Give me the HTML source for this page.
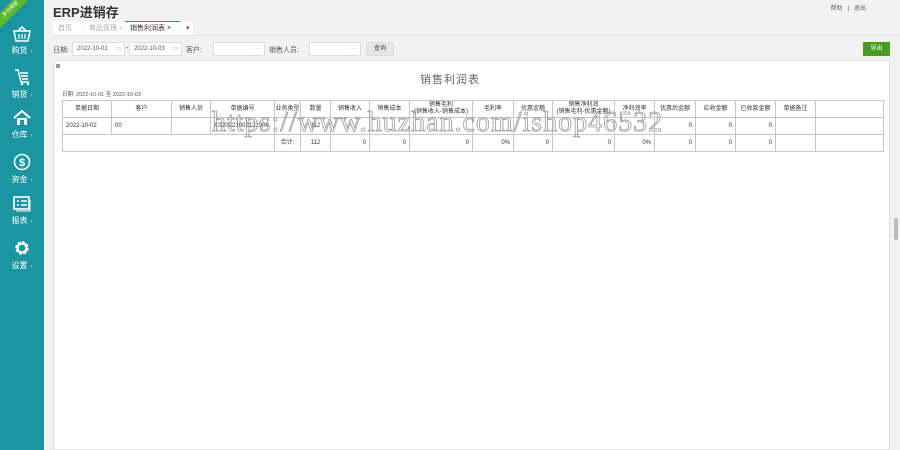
<!DOCTYPE html>
<html><head><meta charset="utf-8"><style>
*{margin:0;padding:0;box-sizing:border-box}
body{width:900px;height:450px;overflow:hidden;background:#f2f2f2;font-family:"Liberation Sans","Noto Sans CJK SC",sans-serif;font-size:7px;color:#444;position:relative}
.side{position:absolute;left:0;top:0;width:44px;height:450px;background:#1c95a2}
.nav{position:absolute;left:0;width:44px;text-align:center;color:#fff;font-size:8px}
.nav svg{display:block;margin:0 auto 3px}
.nav i{font-style:normal;font-size:6px;opacity:.7;margin-left:3px}
.rib{position:absolute;left:-14px;top:4px;width:50px;height:11px;background:#5cb82e;transform:rotate(-45deg);color:#fff;font-size:5px;text-align:center;line-height:11px}
.abs{position:absolute}
.tab{position:absolute;top:22px;height:13px;line-height:13px;font-size:7px;color:#aaa;padding-left:5px}
.inp{position:absolute;top:42px;height:14px;background:#fff;border:1px solid #ddd;font-size:6px;line-height:12px;padding-left:4px;color:#555}
.panel{position:absolute;left:53px;top:60px;width:837px;height:390px;background:#fff;border:1px solid #e0e0e0}
table{position:absolute;left:62px;top:100px;border-collapse:collapse;table-layout:fixed}
td{border:1px solid #c8c8c8;font-size:6px;height:17px;text-align:center;color:#333;overflow:hidden;white-space:nowrap;line-height:7px}
.r{text-align:right;padding-right:3px}
.l{text-align:left;padding-left:3px}
.wm{position:absolute;left:212px;top:107px;font-family:"Liberation Serif",serif;font-size:28px;color:transparent;-webkit-text-stroke:0.8px #999;letter-spacing:1px;white-space:nowrap}
</style></head><body>
<div class="side">
<div class="rib">多仓库版</div>
<div class="nav" style="top:26px"><svg width="20" height="16" viewBox="0 0 20 16"><path d="M2 5h16l-2 10H4z M6 5l4-4 4 4" fill="none" stroke="#fff" stroke-width="1.6"/><path d="M7 8v5M10 8v5M13 8v5" stroke="#fff" stroke-width="1.2"/></svg>购货<i>›</i></div>
<div class="nav" style="top:68px"><svg width="18" height="18" viewBox="0 0 18 18"><path d="M2 2h3l3 12h8" fill="none" stroke="#fff" stroke-width="1.6"/><path d="M7 5h8M8 8h7M9 11h6" stroke="#fff" stroke-width="1.5"/><circle cx="9" cy="16" r="1.3" fill="#fff"/><circle cx="15" cy="16" r="1.3" fill="#fff"/></svg>销货<i>›</i></div>
<div class="nav" style="top:110px"><svg width="18" height="16" viewBox="0 0 18 16"><path d="M1 8L9 1l8 7" fill="none" stroke="#fff" stroke-width="2"/><path d="M4 8v7h10V8" fill="#fff"/><rect x="7" y="10" width="4" height="5" fill="#1c95a2"/></svg>仓库<i>›</i></div>
<div class="nav" style="top:153px"><svg width="18" height="18" viewBox="0 0 18 18"><circle cx="9" cy="9" r="7.5" fill="none" stroke="#fff" stroke-width="1.6"/><text x="9" y="13" font-size="11" font-weight="bold" fill="#fff" text-anchor="middle" font-family="Liberation Sans">$</text></svg>资金<i>›</i></div>
<div class="nav" style="top:196px"><svg width="18" height="16" viewBox="0 0 18 16"><rect x="1" y="1" width="15" height="12" fill="none" stroke="#fff" stroke-width="1.6"/><path d="M4 5h2M8 5h6M4 9h2M8 9h6" stroke="#fff" stroke-width="1.5"/><path d="M3 15h14V4" fill="none" stroke="#fff" stroke-width="1"/></svg>报表<i>›</i></div>
<div class="nav" style="top:239px"><svg width="18" height="18" viewBox="0 0 18 18"><circle cx="9" cy="9" r="5" fill="none" stroke="#fff" stroke-width="3.5" stroke-dasharray="2.6 1.3"/><circle cx="9" cy="9" r="4.5" fill="none" stroke="#fff" stroke-width="2"/></svg>设置<i>›</i></div>
</div>
<div class="abs" style="left:53px;top:2px;font-size:13px;font-weight:bold;color:#333">ERP进销存</div>
<div class="abs" style="right:34px;top:3px;font-size:6px;color:#666">帮助 &nbsp;&nbsp;|&nbsp;&nbsp; 退出</div>
<div class="abs" style="left:53px;top:35px;width:847px;height:1px;background:#e2e2e2"></div>
<div class="tab" style="left:53px;width:30px;background:#fff">首页</div>
<div class="tab" style="left:84px;width:40px;background:#fff">商品管理 <span style="color:#9cc">×</span></div>
<div class="tab" style="left:125px;width:55px;background:#fff;color:#333;border-top:1px solid #1c95a2;height:14px;top:21px">销售利润表 <span style="color:#333">×</span></div>
<div class="tab" style="left:181px;width:12px;background:#fff;color:#555">▾</div>
<div class="abs" style="left:53px;top:45px;color:#555">日期:</div>
<div class="inp" style="left:72px;width:53px">2022-10-01 <span style="float:right;margin-right:3px;color:#999">▭</span></div>
<div class="abs" style="left:126px;top:45px">-</div>
<div class="inp" style="left:129px;width:53px">2022-10-03 <span style="float:right;margin-right:3px;color:#999">▭</span></div>
<div class="abs" style="left:186px;top:45px;color:#555">客户:</div>
<div class="inp" style="left:213px;width:52px"><span style="float:right;margin-right:3px;color:#888">···</span></div>
<div class="abs" style="left:269px;top:45px;color:#555">销售人员:</div>
<div class="inp" style="left:309px;width:52px"><span style="float:right;margin-right:3px;color:#888">···</span></div>
<div class="abs" style="left:366px;top:42px;width:28px;height:14px;background:#e6e6e6;border:1px solid #ddd;text-align:center;line-height:12px;font-size:6px">查询</div>
<div class="abs" style="left:863px;top:42px;width:27px;height:14px;background:#4a9c1f;color:#fff;text-align:center;line-height:14px;font-size:6px">导出</div>
<div class="panel"></div>
<div class="abs" style="left:56px;top:64px;width:4px;height:4px;background:#999"></div>
<div class="abs" style="left:420px;top:71px;font-size:11px;color:#666;letter-spacing:1px">销售利润表</div>
<div class="abs" style="left:62px;top:90px;font-size:5.5px;color:#555">日期: 2022-10-01 至 2022-10-03</div>
<table>
<colgroup><col width="49"><col width="60"><col width="39"><col width="64"><col width="26"><col width="30"><col width="39"><col width="40"><col width="63"><col width="41"><col width="39"><col width="62"><col width="40"><col width="41"><col width="40"><col width="40"><col width="40"><col width="68"></colgroup>
<tr><td>单据日期</td><td>客户</td><td>销售人员</td><td>单据编号</td><td>业务类型</td><td>数量</td><td>销售收入</td><td>销售成本</td><td>销售毛利<br>(销售收入-销售成本)</td><td>毛利率</td><td>优惠金额</td><td>销售净利润<br>(销售毛利-优惠金额)</td><td>净利润率</td><td>优惠后金额</td><td>应收金额</td><td>已收款金额</td><td>单据备注</td><td></td></tr>
<tr><td class="l">2022-10-02</td><td class="l">00</td><td></td><td class="l">XS20221002121908</td><td></td><td>112</td><td></td><td></td><td></td><td></td><td></td><td></td><td></td><td class="r">0</td><td class="r">0</td><td class="r">0</td><td></td><td></td></tr>
<tr><td colspan="4"></td><td>合计:</td><td>112</td><td class="r">0</td><td class="r">0</td><td class="r">0</td><td class="r">0%</td><td class="r">0</td><td class="r">0</td><td class="r">0%</td><td class="r">0</td><td class="r">0</td><td class="r">0</td><td></td><td></td></tr>
</table>
<div class="wm">https://www.huzhan.com/ishop46532</div>
<div class="abs" style="left:893px;top:60px;width:7px;height:390px;background:#f0f0f0"></div>
<div class="abs" style="left:894px;top:218px;width:4px;height:22px;background:#bbb;border-radius:2px"></div>
</body></html>
